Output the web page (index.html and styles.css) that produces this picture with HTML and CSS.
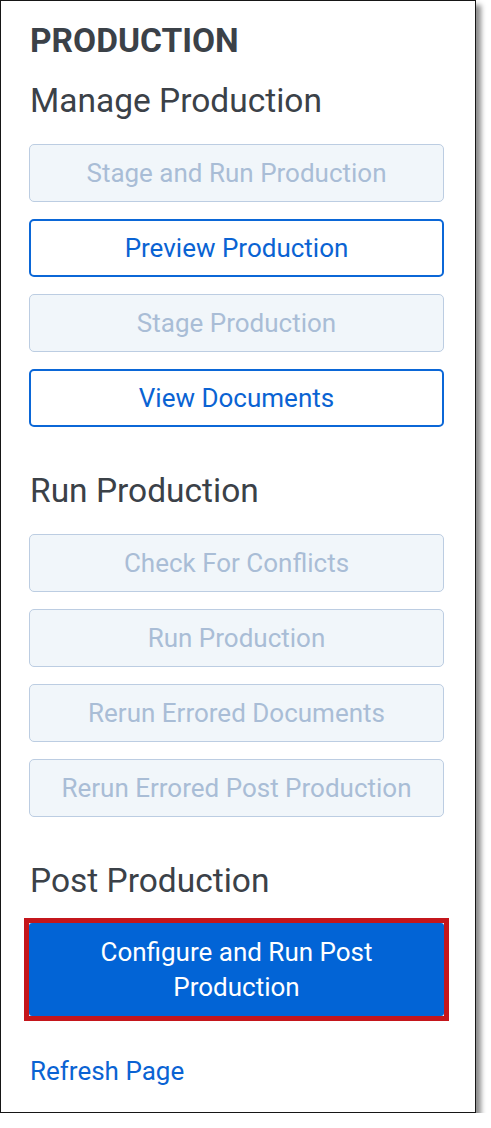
FILE: index.html
```html
<!DOCTYPE html>
<html lang="en">
<head>
<meta charset="utf-8">
<title>Production</title>
<link rel="stylesheet" href="styles.css">
</head>
<body>
<div class="panel">
  <h1 class="title">PRODUCTION</h1>

  <h2 class="section">Manage Production</h2>
  <div class="btn-list">
    <button class="btn btn-disabled" disabled>Stage and Run Production</button>
    <button class="btn btn-outline">Preview Production</button>
    <button class="btn btn-disabled" disabled>Stage Production</button>
    <button class="btn btn-outline">View Documents</button>
  </div>

  <h2 class="section section-gap">Run Production</h2>
  <div class="btn-list">
    <button class="btn btn-disabled" disabled>Check For Conflicts</button>
    <button class="btn btn-disabled" disabled>Run Production</button>
    <button class="btn btn-disabled" disabled>Rerun Errored Documents</button>
    <button class="btn btn-disabled" disabled>Rerun Errored Post Production</button>
  </div>

  <h2 class="section section-gap">Post Production</h2>
  <div class="highlight">
    <button class="btn btn-primary">Configure and Run Post Production</button>
  </div>

  <a class="refresh" href="#">Refresh Page</a>
</div>
</body>
</html>
```

FILE: styles.css
```css
html, body {
  margin: 0;
  padding: 0;
  background: #ffffff;
}

body {
  font-family: Roboto, "Noto Sans", "Liberation Sans", sans-serif;
}

.panel {
  box-sizing: border-box;
  width: 476px;
  height: 1113px;
  border: 1px solid #161616;
  background: #ffffff;
  box-shadow: 5px 5px 5px rgba(0, 0, 0, 0.45);
  padding: 21px 30px 0 28px;
  display: flex;
  flex-direction: column;
  align-items: flex-start;
}

.title {
  margin: 0;
  font-size: 33.5px;
  line-height: 38px;
  font-weight: 700;
  color: #3b4148;
  padding-left: 1px;
}

.section {
  margin: 21px 0 0 0;
  font-size: 33.5px;
  line-height: 40px;
  font-weight: 400;
  color: #3b4148;
  padding-left: 1px;
}

.section-gap {
  margin-top: 44px;
}

.btn-list {
  margin-top: 23px;
  display: flex;
  flex-direction: column;
  gap: 17px;
  width: 415px;
}

.btn {
  box-sizing: border-box;
  width: 415px;
  height: 58px;
  border-radius: 5px;
  font-family: Roboto, "Noto Sans", "Liberation Sans", sans-serif;
  font-size: 26px;
  line-height: 30px;
  font-weight: 400;
  padding: 0 10px;
  text-align: center;
  cursor: pointer;
}

.btn-disabled {
  background: #f1f6fa;
  border: 1.5px solid #bccde2;
  color: #a9bdd6;
  cursor: default;
}

.btn-outline {
  background: #ffffff;
  border: 2px solid #0b67d7;
  color: #0a63d3;
}

.highlight {
  margin: 17px 0 0 -5px;
  border: 5px solid #c4161c;
  background: #ffffff;
  display: flex;
}

.btn-primary {
  display: block;
  height: 93px;
  background: #0264d6;
  border: none;
  border-radius: 3px;
  color: #ffffff;
  line-height: 35px;
  padding: 0 60px;
}

.refresh {
  margin-top: 35px;
  font-size: 26px;
  line-height: 30px;
  color: #0a63d3;
  text-decoration: none;
  padding-left: 1px;
}
```
